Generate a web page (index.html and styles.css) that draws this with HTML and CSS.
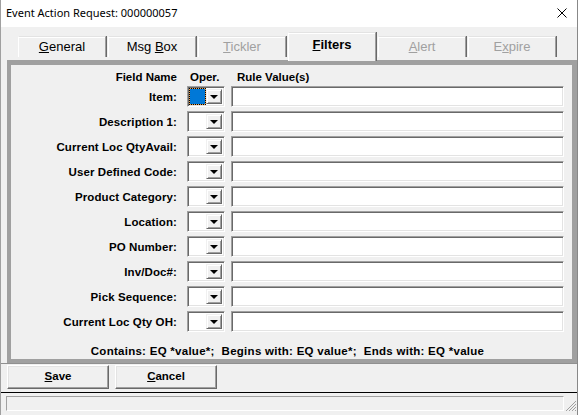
FILE: index.html
```html
<!DOCTYPE html>
<html>
<head>
<meta charset="utf-8">
<link rel="stylesheet" href="styles.css">
</head>
<body>
<div class="window">
  <div class="titlebar">
    <span class="title">Event Action Request: 000000057</span>
    <svg class="close" width="10" height="10" viewBox="0 0 10 10"><path d="M0.5 0.5 L9.5 9.5 M9.5 0.5 L0.5 9.5" stroke="#000" stroke-width="1" fill="none"/></svg>
  </div>
  <div class="tabs">
    <div class="tab"><u>G</u>eneral</div>
    <div class="tab">Msg <u>B</u>ox</div>
    <div class="tab disabled"><u>T</u>ickler</div>
    <div class="tab active"><u>F</u>ilters</div>
    <div class="tab disabled"><u>A</u>lert</div>
    <div class="tab disabled">E<u>x</u>pire</div>
  </div>
  <div class="panel">
    <div class="header">
      <div class="h-label">Field Name</div>
      <div class="h-oper">Oper.</div>
      <div class="h-rule">Rule Value(s)</div>
    </div>
    <div class="rows">
      <div class="label">Item:</div>
      <div class="combo"><div class="cval focus"></div><div class="cbtn"><span class="arrow"></span></div></div>
      <div class="field"></div>

      <div class="label">Description 1:</div>
      <div class="combo"><div class="cval"></div><div class="cbtn"><span class="arrow"></span></div></div>
      <div class="field"></div>

      <div class="label">Current Loc QtyAvail:</div>
      <div class="combo"><div class="cval"></div><div class="cbtn"><span class="arrow"></span></div></div>
      <div class="field"></div>

      <div class="label">User Defined Code:</div>
      <div class="combo"><div class="cval"></div><div class="cbtn"><span class="arrow"></span></div></div>
      <div class="field"></div>

      <div class="label">Product Category:</div>
      <div class="combo"><div class="cval"></div><div class="cbtn"><span class="arrow"></span></div></div>
      <div class="field"></div>

      <div class="label">Location:</div>
      <div class="combo"><div class="cval"></div><div class="cbtn"><span class="arrow"></span></div></div>
      <div class="field"></div>

      <div class="label">PO Number:</div>
      <div class="combo"><div class="cval"></div><div class="cbtn"><span class="arrow"></span></div></div>
      <div class="field"></div>

      <div class="label">Inv/Doc#:</div>
      <div class="combo"><div class="cval"></div><div class="cbtn"><span class="arrow"></span></div></div>
      <div class="field"></div>

      <div class="label">Pick Sequence:</div>
      <div class="combo"><div class="cval"></div><div class="cbtn"><span class="arrow"></span></div></div>
      <div class="field"></div>

      <div class="label">Current Loc Qty OH:</div>
      <div class="combo"><div class="cval"></div><div class="cbtn"><span class="arrow"></span></div></div>
      <div class="field"></div>
    </div>
    <div class="hint">Contains: EQ *value*;  Begins with: EQ value*;  Ends with: EQ *value</div>
  </div>
  <div class="buttonbar">
    <div class="btn"><u>S</u>ave</div>
    <div class="btn"><u>C</u>ancel</div>
  </div>
  <div class="statusbar">
    <div class="statusfield"></div>
    <svg class="grip" width="12" height="12" viewBox="0 0 12 12">
      <path d="M11 1 L1 11 M11 4 L4 11 M11 7 L7 11 M11 10 L10 11" stroke="#a0a0a0" stroke-width="1" fill="none"/>
    </svg>
  </div>
</div>
</body>
</html>
```

FILE: styles.css
```css
html, body {
  margin: 0;
  padding: 0;
  background: #f0f0f0;
}
.window {
  width: 578px;
  height: 415px;
  box-sizing: border-box;
  border-left: 1px solid #a0a0a0;
  border-right: 1px solid #888888;
  background: #f0f0f0;
  font-family: "Liberation Sans", Arial, sans-serif;
  overflow: hidden;
}
.titlebar {
  height: 27px;
  background: #ffffff;
  display: flex;
  align-items: center;
  justify-content: space-between;
  padding: 0 10px 0 5px;
}
.title {
  font-family: "Noto Sans", sans-serif;
  font-size: 11px;
  color: #000;
  margin-top: -2px;
}
.close {
  margin-top: -1px;
}
.tabs {
  height: 33px;
  display: flex;
  gap: 2px;
  padding-left: 17px;
  box-sizing: border-box;
  align-items: flex-start;
}
.tab {
  width: 88px;
  height: 21px;
  margin-top: 9px;
  box-sizing: border-box;
  border-top: 1px solid #e3e3e3;
  border-left: 1px solid #ffffff;
  border-right: 1px solid #a0a0a0;
  box-shadow: 1px 0 0 #696969, inset 0 1px 0 #ffffff;
  font-size: 13px;
  text-align: center;
  line-height: 19px;
  color: #000;
}
.tab.disabled {
  color: #a0a0a0;
}
.tab.active {
  height: 29px;
  margin-top: 5px;
  font-weight: bold;
  line-height: 23px;
  position: relative;
  z-index: 1;
  background: #f0f0f0;
}
.panel {
  margin-left: 6px;
  width: 570px;
  height: 304px;
  box-sizing: border-box;
  border-style: solid;
  border-color: #a0a0a0;
  border-width: 5px 5px 5px 4px;
  background: #f0f0f0;
  font-size: 11.5px;
  font-weight: bold;
  color: #000;
}
.header {
  height: 21px;
  display: flex;
  align-items: flex-end;
  padding-bottom: 2px;
  box-sizing: border-box;
  line-height: 13px;
}
.h-label {
  width: 166px;
  text-align: right;
}
.h-oper {
  margin-left: 13px;
  width: 47px;
}
.rows {
  display: grid;
  grid-template-columns: 170px 38px 333px;
  grid-auto-rows: 21px;
  column-gap: 6px;
  row-gap: 4px;
}
.label {
  text-align: right;
  padding-right: 4px;
  line-height: 22px;
  white-space: nowrap;
  letter-spacing: 0.1px;
}
.combo {
  box-sizing: border-box;
  border-style: solid;
  border-width: 1px;
  border-color: #a0a0a0 #ffffff #ffffff #a0a0a0;
  box-shadow: inset 1px 1px 0 #696969, inset -1px -1px 0 #e3e3e3;
  background: #ffffff;
  display: flex;
  align-items: stretch;
  padding: 2px;
  gap: 1px;
}
.cval {
  flex: 1;
}
.cval.focus {
  background: #0078d7;
  outline: 1px dotted #000;
  box-shadow: 0 0 0 1px #e8a050;
}
.cbtn {
  width: 16px;
  box-sizing: border-box;
  background: #f0f0f0;
  border-style: solid;
  border-width: 1px;
  border-color: #f0f0f0 #696969 #696969 #f0f0f0;
  box-shadow: inset 1px 1px 0 #ffffff, inset -1px -1px 0 #a0a0a0;
  display: flex;
  align-items: center;
  justify-content: center;
}
.arrow {
  width: 0;
  height: 0;
  border-left: 4px solid transparent;
  border-right: 4px solid transparent;
  border-top: 4px solid #000;
  margin-top: 1px;
}
.field {
  box-sizing: border-box;
  border-style: solid;
  border-width: 1px;
  border-color: #a0a0a0 #ffffff #ffffff #a0a0a0;
  box-shadow: inset 1px 1px 0 #696969, inset -1px -1px 0 #e3e3e3;
  background: #ffffff;
}
.hint {
  margin-top: 13px;
  line-height: 13px;
  text-align: center;
  white-space: pre;
  padding-right: 8px;
  letter-spacing: 0.27px;
}
.buttonbar {
  height: 29px;
  box-sizing: border-box;
  display: flex;
  gap: 6px;
  padding: 1px 0 0 6px;
  border-top: 1px solid #909090;
  margin-top: -1px;
}
.btn {
  width: 102px;
  height: 24px;
  box-sizing: border-box;
  border-style: solid;
  border-width: 1px;
  border-color: #ffffff #696969 #696969 #ffffff;
  box-shadow: inset -1px -1px 0 #a0a0a0, inset 1px 1px 0 #e3e3e3;
  font-size: 11.5px;
  font-weight: bold;
  text-align: center;
  line-height: 21px;
  color: #000;
}
.statusbar {
  height: 22px;
  box-sizing: border-box;
  border-top: 1px solid #000;
  display: flex;
  align-items: flex-start;
  padding: 3px 0 0 5px;
  position: relative;
}
.statusfield {
  width: 558px;
  height: 15px;
  box-sizing: border-box;
  border-style: solid;
  border-width: 1px;
  border-color: #a0a0a0 #ffffff #ffffff #a0a0a0;
}
.grip {
  position: absolute;
  right: 0;
  bottom: 2px;
}
```
